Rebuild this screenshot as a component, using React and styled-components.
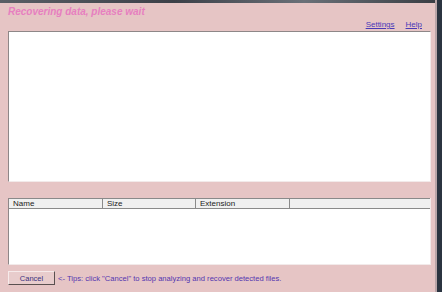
import styled, { createGlobalStyle } from "styled-components";

const GlobalStyle = createGlobalStyle`
  html, body {
    margin: 0;
    padding: 0;
    background: #e6c5c5;
    overflow: hidden;
  }
`;

const Window = styled.div`
  width: 442px;
  height: 292px;
  display: flex;
  background: #e6c5c5;
  font-family: "Liberation Sans", Arial, sans-serif;
`;

const Main = styled.div`
  flex: 1;
  display: flex;
  flex-direction: column;
`;

const TopStrip = styled.div`
  height: 3px;
  background: linear-gradient(90deg, #5a5f66, #3c4048 40%, #6a7078 70%, #3a3e44);
`;

const RightEdge = styled.div`
  width: 5px;
  background: #2b3440;
  border-left: 2px solid #b9a5a8;
`;

const Content = styled.div`
  flex: 1;
  display: flex;
  flex-direction: column;
  padding: 0 4px 0 8px;
`;

const Title = styled.div`
  height: 15px;
  padding-top: 2px;
  font-size: 10px;
  line-height: 13px;
  font-weight: bold;
  font-style: italic;
  color: #e77fc0;
`;

const Links = styled.div`
  display: flex;
  justify-content: flex-end;
  gap: 11px;
  height: 11px;
  padding-right: 9px;
  font-size: 8px;
  line-height: 10px;
`;

const Link = styled.a`
  color: #4a3ab8;
  text-decoration: underline;
  cursor: pointer;
`;

const LogPanel = styled.div`
  height: 149px;
  background: #fff;
  border-top: 1px solid #8e8788;
  border-left: 1px solid #8e8788;
  border-right: 1px solid #f2eaea;
  border-bottom: 1px solid #f2eaea;
`;

const Spacer = styled.div`
  height: ${(p) => p.$h}px;
`;

const List = styled.div`
  height: 66px;
  background: #fff;
  display: flex;
  flex-direction: column;
  border-left: 1px solid #8e8788;
  border-right: 1px solid #f2eaea;
  border-bottom: 1px solid #f2eaea;
`;

const Header = styled.div`
  display: flex;
  height: 9px;
  background: #f0f0f0;
  border-top: 1px solid #8a8a8a;
  border-bottom: 1px solid #8a8a8a;
`;

const Col = styled.div`
  width: ${(p) => p.$w}px;
  flex: ${(p) => (p.$w ? "none" : 1)};
  padding-left: 4px;
  box-sizing: border-box;
  border-right: ${(p) => (p.$w ? "1px solid #8a8a8a" : "none")};
  font-size: 8px;
  line-height: 9px;
  color: #222;
`;

const Footer = styled.div`
  display: flex;
  align-items: center;
  gap: 3px;
  height: 14px;
`;

const Button = styled.button`
  width: 47px;
  height: 14px;
  padding: 0;
  background: #e8cccc;
  border: 1px solid;
  border-color: #f6eaea #5a5050 #5a5050 #f6eaea;
  font-family: "Liberation Sans", Arial, sans-serif;
  font-size: 7.5px;
  color: #3a3080;
`;

const Tip = styled.span`
  font-size: 7.6px;
  color: #5336b0;
`;

export default function App() {
  return (
    <Window>
      <GlobalStyle />
      <Main>
        <TopStrip />
        <Content>
          <Title>Recovering data, please wait</Title>
          <Links>
            <Link>Settings</Link>
            <Link>Help</Link>
          </Links>
          <LogPanel />
          <Spacer $h={16} />
          <List>
            <Header>
              <Col $w={94}>Name</Col>
              <Col $w={93}>Size</Col>
              <Col $w={94}>Extension</Col>
              <Col />
            </Header>
          </List>
          <Spacer $h={6} />
          <Footer>
            <Button>Cancel</Button>
            <Tip>&lt;- Tips: click "Cancel" to stop analyzing and recover detected files.</Tip>
          </Footer>
        </Content>
      </Main>
      <RightEdge />
    </Window>
  );
}
